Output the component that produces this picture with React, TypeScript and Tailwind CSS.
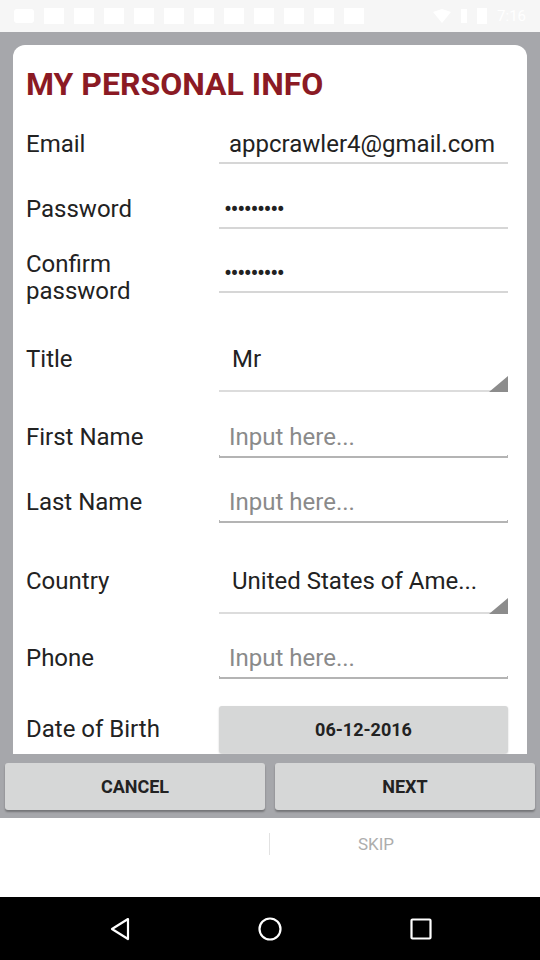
import React from 'react';

function Underline({ dark }: { dark?: boolean }) {
  return (
    <div
      className={`h-[4px] border-b-2 border-l border-r ${dark ? 'border-[#b4b4b4]' : 'border-[#d6d6d6]'}`}
    />
  );
}

function TextValue({ value, dots }: { value: string; dots?: boolean }) {
  return (
    <div className="flex h-[40px] w-[289px] flex-col justify-end">
      <div
        className={`flex flex-1 items-center pt-[3px] text-[#222] ${dots ? 'pl-[5px] text-[24px] tracking-[-1.5px]' : 'pl-[10px] text-[24px]'}`}
      >
        {value}
      </div>
      <Underline />
    </div>
  );
}

function InputHere() {
  return (
    <div className="flex h-[41px] w-[289px] flex-col justify-end">
      <div className="flex flex-1 items-center pl-[10px] pt-[2px] text-[24px] text-[#8a8a8a]">Input here...</div>
      <Underline dark />
    </div>
  );
}

function Spinner({ value }: { value: string }) {
  return (
    <div className="relative flex h-[65px] w-[289px] flex-col">
      <div className="flex flex-1 items-center pl-[13px] text-[24px] text-[#222]">{value}</div>
      <div className="h-[2px] bg-[#dcdcdc]" />
      <svg className="absolute bottom-0 right-0" width="19" height="16" viewBox="0 0 19 16">
        <polygon points="19,0 19,16 0,16" fill="#8c8c8c" />
      </svg>
    </div>
  );
}

function Row({ label, children, className = '' }: { label: React.ReactNode; children: React.ReactNode; className?: string }) {
  return (
    <div className={`flex items-center ${className}`}>
      <div className="w-[193px] text-[24px] leading-[27px] text-[#222]">{label}</div>
      {children}
    </div>
  );
}

export default function App() {
  return (
    <div className="flex h-[960px] w-[540px] flex-col bg-white" style={{ fontFamily: 'Roboto, "Noto Sans", sans-serif' }}>
      {/* status bar */}
      <div className="flex h-[32px] items-center bg-[#f6f6f6] px-[14px] text-white">
        <div className="flex items-center gap-[10px]">
          <div className="h-[14px] w-[20px] rounded-[3px] bg-white" />
          {Array.from({ length: 11 }).map((_, i) => (
            <div key={i} className="h-[16px] w-[20px] bg-white" />
          ))}
        </div>
        <div className="ml-auto flex items-center gap-[10px]">
          <svg width="18" height="14" viewBox="0 0 18 14">
            <polygon points="0,3 9,14 18,3 9,0" fill="#fff" />
          </svg>
          <div className="h-[14px] w-[6px] bg-white" />
          <div className="h-[16px] w-[10px] bg-white" />
          <span className="text-[15px]">7:16</span>
        </div>
      </div>

      {/* gray content area */}
      <div className="flex h-[786px] flex-col bg-[#a6a7ab] pt-[13px]">
        <div className="mx-[13px] h-[709px] overflow-hidden rounded-t-[12px] bg-white pl-[13px] pr-[19px]">
          <div className="pt-[21px] text-[32px] font-bold leading-[36px] text-[#8b1a24]">MY PERSONAL INFO</div>

          <Row label="Email" className="mt-[22px]">
            <TextValue value="appcrawler4@gmail.com" />
          </Row>
          <Row label="Password" className="mt-[25px]">
            <TextValue value="•••••••••" dots />
          </Row>
          <div className="mt-[22px] flex items-start">
            <div className="w-[193px] text-[24px] leading-[27px] text-[#222]">
              Confirm
              <br />
              password
            </div>
            <div className="mt-[2px]">
              <TextValue value="•••••••••" dots />
            </div>
          </div>
          <Row label="Title" className="mt-[22px]">
            <Spinner value="Mr" />
          </Row>
          <Row label="First Name" className="mt-[25px]">
            <InputHere />
          </Row>
          <Row label="Last Name" className="mt-[24px]">
            <InputHere />
          </Row>
          <Row label="Country" className="mt-[26px]">
            <Spinner value="United States of Ame..." />
          </Row>
          <Row label="Phone" className="mt-[24px]">
            <InputHere />
          </Row>
          <Row label="Date of Birth" className="mt-[27px]">
            <div className="flex h-[47px] w-[289px] items-center justify-center rounded-[3px] bg-[#d6d7d7] text-[18px] font-bold text-[#222] shadow-[0_1px_2px_rgba(0,0,0,0.2)]">
              06-12-2016
            </div>
          </Row>
        </div>

        <div className="mt-[9px] flex gap-[10px] px-[5px]">
          <button className="flex h-[47px] flex-1 items-center justify-center rounded-[3px] bg-[#d6d7d7] text-[18px] font-bold text-[#222] shadow-[0_2px_2px_rgba(0,0,0,0.3)]">
            CANCEL
          </button>
          <button className="flex h-[47px] flex-1 items-center justify-center rounded-[3px] bg-[#d6d7d7] text-[18px] font-bold text-[#222] shadow-[0_2px_2px_rgba(0,0,0,0.3)]">
            NEXT
          </button>
        </div>
      </div>

      {/* skip bar */}
      <div className="flex h-[79px] items-start bg-white pt-[15px]">
        <div className="w-[269px]" />
        <div className="h-[22px] w-px bg-[#e2e2e2]" />
        <div className="w-[212px] text-center text-[17px] leading-[22px] text-[#adadad]">SKIP</div>
      </div>

      {/* nav bar */}
      <div className="flex h-[63px] items-center bg-black">
        <div className="flex w-[240px] justify-center">
          <svg width="22" height="24" viewBox="0 0 22 24">
            <path d="M19 2 L3 12 L19 22 Z" fill="none" stroke="#fff" strokeWidth="2.2" strokeLinejoin="round" />
          </svg>
        </div>
        <div className="flex w-[60px] justify-center">
          <svg width="24" height="24" viewBox="0 0 24 24">
            <circle cx="12" cy="12" r="10.5" fill="none" stroke="#fff" strokeWidth="2.2" />
          </svg>
        </div>
        <div className="flex w-[240px] justify-center pl-[2px]">
          <svg width="22" height="22" viewBox="0 0 22 22">
            <rect x="1.5" y="1.5" width="19" height="19" rx="1" fill="none" stroke="#fff" strokeWidth="2.2" />
          </svg>
        </div>
      </div>
    </div>
  );
}
